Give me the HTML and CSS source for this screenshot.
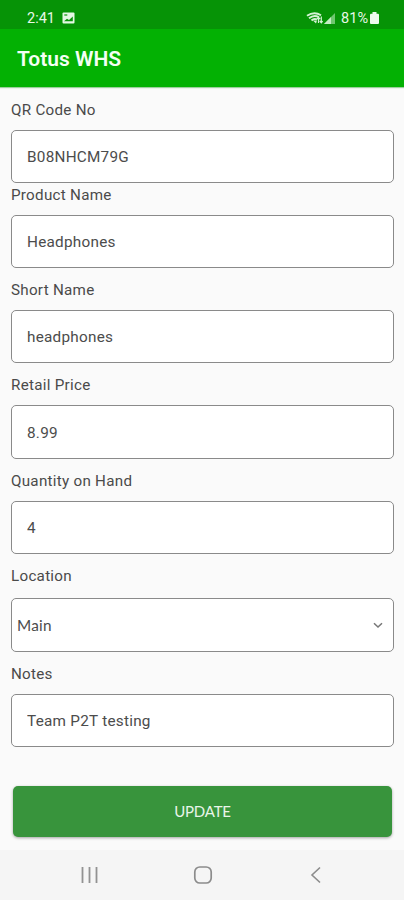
FILE: index.html
```html
<!DOCTYPE html>
<html lang="en">
<head>
<meta charset="utf-8">
<meta name="viewport" content="width=device-width, initial-scale=1">
<title>Totus WHS</title>
<link rel="stylesheet" href="styles.css">
</head>
<body>
<div class="status">
  <span class="clock">2:41</span>
  <svg class="photo" width="13" height="12" viewBox="0 0 13 12"><rect x=".5" y=".5" width="12" height="11" rx="1" fill="#e4f7e4"/><path d="M2 9.3 5 6.8l2 1.1 3.8-3.4v4.8z" fill="#079307"/><path d="M2.3 3h3" stroke="#079307" stroke-width="1.2"/></svg>
  <svg class="wifi" width="17" height="13" viewBox="0 0 17 13" fill="none" stroke="#d5f2d5"><path d="M1 3.8Q8 -1 15 3.2M3 6.2Q8 2.2 13 5.2M5.5 8.5Q8 6 11 7.5" stroke-width="1.9"/><path d="M7 8.500h4l-1 3z" fill="#d5f2d5" stroke="none"/><path d="M12.5 11V5.500M10.800 7.200l1.700-1.900 1.700 1.900M15.300 4.500v6M13.800 9l1.500 1.800L16.700 9" stroke-width="1.200"/></svg>
  <svg class="signal" width="11" height="11" viewBox="0 0 11 11"><path d="M0 11 11 0v11z" fill="#6fc76f"/><path d="M0 11 7 4v7z" fill="#c4ebc4"/></svg>
  <span class="percent">81%</span>
  <svg class="battery" width="9" height="12" viewBox="0 0 9 12"><path d="M2.500 0h4v1.800h1.500Q9 1.800 9 3v8Q9 12 8 12H1Q0 12 0 11V3q0-1.200 1-1.200h1.500z" fill="#effbef"/></svg>
</div>
<header class="appbar">Totus WHS</header>
<main class="form">
  <div class="field tight"><label for="qr">QR Code No</label><input id="qr" class="box" value="B08NHCM79G"></div>
  <div class="field"><label for="name">Product Name</label><input id="name" class="box" value="Headphones"></div>
  <div class="field"><label for="short">Short Name</label><input id="short" class="box" value="headphones"></div>
  <div class="field"><label for="price">Retail Price</label><input id="price" class="box" value="8.99"></div>
  <div class="field"><label for="qty">Quantity on Hand</label><input id="qty" class="box" value="4"></div>
  <div class="field location"><label>Location</label>
    <div class="box select"><span>Main</span><svg width="10" height="7" viewBox="0 0 10 7"><path d="M1 1.200 5 5 9 1.200" fill="none" stroke="#777" stroke-width="1.500"/></svg></div>
  </div>
  <div class="field"><label for="notes">Notes</label><input id="notes" class="box" value="Team P2T testing"></div>
  <button class="update">UPDATE</button>
</main>
<nav class="nav">
  <svg width="18" height="18" viewBox="0 0 18 18"><path d="M2.500 1v16M9.500 1v16M16.500 1v16" stroke="#929292" stroke-width="1.800"/></svg>
  <svg width="20" height="18" viewBox="0 0 20 18"><rect x="1.800" y="1" width="16.400" height="16" rx="5" fill="none" stroke="#8c8c8c" stroke-width="1.700"/></svg>
  <svg width="18" height="18" viewBox="0 0 18 18"><path d="M13 1.500 5 9l8 7.500" fill="none" stroke="#8c8c8c" stroke-width="1.600"/></svg>
</nav>
</body>
</html>
```
FILE: styles.css
```css
* { box-sizing: border-box; }
body {
  margin: 0;
  height: 900px;
  display: flex;
  flex-direction: column;
  background: #fafafa;
  font-family: Roboto, sans-serif;
  color: #4a4a4a;
}
.status {
  height: 29px;
  padding: 7px 25px 0 27px;
  display: flex;
  align-items: center;
  background: #069306;
  color: #e8f8e8;
  font-size: 14.5px;
}
.status span { line-height: 20px; padding-top: 1px; }
.photo { margin-left: 7px; }
.wifi { margin-left: auto; margin-right: 1px; }
.percent { margin-left: 6px; }
.battery { margin-left: 2px; }
.appbar {
  height: 58px;
  padding: 2px 17px 0;
  display: flex;
  align-items: center;
  background: #03b103;
  box-shadow: 0 1px 1px #9dcf9d;
  color: #f4fff4;
  font-size: 21px;
  font-weight: 600;
}
.form {
  flex: 1;
  padding: 13.2px 10px 0 11px;
  display: flex;
  flex-direction: column;
}
.field {
  display: flex;
  flex-direction: column;
  gap: 10px;
  margin-bottom: 12px;
}
.tight { margin-bottom: 2px; }
.location { gap: 12.8px; }
.field label {
  height: 20px;
  line-height: 21px;
  font-size: 15.2px;
  letter-spacing: .27px;
}
.box {
  width: 100%;
  height: 53.1px;
  padding: 1px 15px 0;
  border: 1px solid #8a8a8a;
  border-radius: 5px;
  background: #fff;
  color: #4c4c4c;
  font: 15.3px Roboto, sans-serif;
  letter-spacing: .25px;
}
.select {
  display: flex;
  align-items: center;
  justify-content: space-between;
  padding: 0 10px 0 5px;
  font-family: Lato, sans-serif;
}
.update {
  height: 51px;
  margin: 27.3px 2px 0;
  padding: 0 0 1px;
  border: 0;
  border-radius: 5px;
  background: #38943c;
  box-shadow: 0 1px 3px rgba(0, 0, 0, .35);
  color: #e9f5e9;
  font: 15px Lato, sans-serif;
  letter-spacing: -.2px;
}
.nav {
  height: 50px;
  padding: 0 79px 0 80px;
  display: flex;
  align-items: center;
  justify-content: space-between;
  background: #f5f5f5;
}
```
